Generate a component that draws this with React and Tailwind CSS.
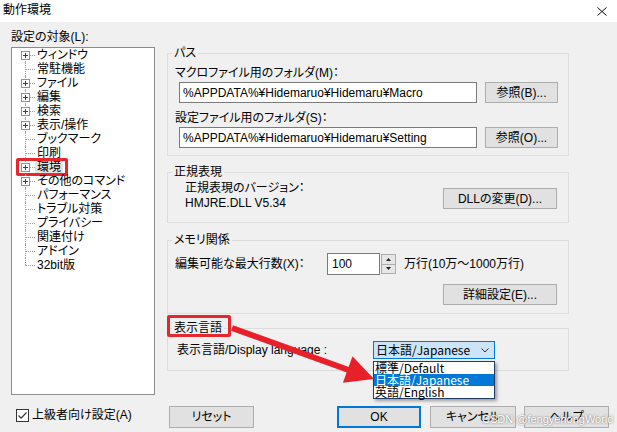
import React from 'react';

const treeItems = [
  { label: 'ウィンドウ', plus: true },
  { label: '常駐機能' },
  { label: 'ファイル', plus: true },
  { label: '編集', plus: true },
  { label: '検索', plus: true },
  { label: '表示/操作', plus: true },
  { label: 'ブックマーク' },
  { label: '印刷' },
  { label: '環境', plus: true, selected: true },
  { label: 'その他のコマンド', plus: true },
  { label: 'パフォーマンス' },
  { label: 'トラブル対策' },
  { label: 'プライバシー' },
  { label: '関連付け' },
  { label: 'アドイン' },
  { label: '32bit版' },
];

const PlusBox = () => (
  <svg className="absolute left-[1px] top-[3px]" width="9" height="9" viewBox="0 0 9 9">
    <rect x="0.5" y="0.5" width="8" height="8" fill="white" stroke="#919191" />
    <path d="M2 4.5h5M4.5 2v5" stroke="#1e3f8f" strokeWidth="1" />
  </svg>
);

const TreeRow = ({ item, first, last }) => {
  const vline = first ? 'top-[7px] bottom-0' : last ? 'top-0 h-[7px]' : 'top-0 bottom-0';
  return (
    <div className="relative flex h-[14px] items-center">
      <div className="relative ml-[8px] h-full w-[17px] shrink-0">
        <div className={`absolute left-[5px] border-l border-dotted border-[#a0a0a0] ${vline}`} />
        <div className="absolute left-[5px] top-[7px] w-[10px] border-t border-dotted border-[#a0a0a0]" />
        {item.plus && <PlusBox />}
      </div>
      <span className={`leading-[14px] ${item.selected ? '-ml-[2px] bg-[#e5e5e5] px-[2px]' : ''}`}>{item.label}</span>
      {item.selected && (
        <div className="pointer-events-none absolute left-[4px] top-[-2px] h-[18px] w-[52px] rounded-[2px] border-[3px] border-[#e8262d]" />
      )}
    </div>
  );
};

const Btn = ({ children, className = '', primary }) => (
  <button
    className={`flex items-center justify-center bg-[#e1e1e1] leading-[14px] ${
      primary ? 'border-2 border-[#0078d7]' : 'border border-[#adadad]'
    } ${className}`}
  >
    {children}
  </button>
);

const Group = ({ title, className = '', children, mark }) => (
  <fieldset className={`border border-[#dcdcdc] ${className}`}>
    <legend className="relative ml-[4px] px-[2px] leading-[14px]">
      {title}
      {mark && (
        <span className="pointer-events-none absolute left-[-5px] top-[-6px] h-[22px] w-[64px] rounded-[2px] border-[3px] border-[#e8262d]" />
      )}
    </legend>
    {children}
  </fieldset>
);

const Field = ({ value }) => (
  <div className="ml-[4px] flex h-[21px] w-[298px] items-center border border-[#7a7a7a] bg-white pl-[3px]">{value}</div>
);

export default function App() {
  return (
    <div className="relative h-[432px] w-[617px] overflow-hidden bg-[#f0f0f0] font-['Liberation_Sans','Noto_Sans_CJK_JP',sans-serif] text-[12px] leading-[14px] text-black [font-feature-settings:'palt']">
      {/* title bar */}
      <div className="flex h-[22px] items-start justify-between bg-white">
        <div className="pl-[3px] pt-[3px]">動作環境</div>
        <svg className="mr-[10px] mt-[7px]" width="10" height="9" viewBox="0 0 10 9">
          <path d="M0.5 0.5l9 8M9.5 0.5l-9 8" stroke="#111" strokeWidth="1" />
        </svg>
      </div>

      <div className="flex h-[384px]">
        {/* left: tree */}
        <div className="w-[155px] pl-[11px] pt-[8px]">
          <div>設定の対象(L):</div>
          <div className="mt-[3px] h-[348px] w-[144px] border border-[#8c8c8c] bg-white">
            {treeItems.map((item, i) => (
              <TreeRow key={item.label} item={item} first={i === 0} last={i === treeItems.length - 1} />
            ))}
          </div>
        </div>

        {/* right: settings */}
        <div className="ml-[12px] flex w-[402px] flex-col pt-[24px]">
          <Group title="パス" className="h-[110px]">
            <div className="pl-[7px] pt-[6px]">
              <div>マクロファイル用のフォルダ(M)：</div>
              <div className="mt-[2px] flex">
                <Field value="%APPDATA%¥Hidemaruo¥Hidemaru¥Macro" />
                <Btn className="ml-[8px] h-[21px] w-[73px]">参照(B)...</Btn>
              </div>
              <div className="mt-[8px]">設定ファイル用のフォルダ(S)：</div>
              <div className="mt-[2px] flex">
                <Field value="%APPDATA%¥Hidemaruo¥Hidemaru¥Setting" />
                <Btn className="ml-[8px] h-[21px] w-[73px]">参照(O)...</Btn>
              </div>
            </div>
          </Group>

          <Group title="正規表現" className="mt-[9px] h-[58px]">
            <div className="flex items-start">
              <div className="pl-[17px] pt-[2px] leading-[15px]">
                <div>正規表現のバージョン：</div>
                <div>HMJRE.DLL V5.34</div>
              </div>
              <Btn className="ml-auto mr-[11px] mt-[9px] h-[21px] w-[114px]">DLLの変更(D)...</Btn>
            </div>
          </Group>

          <Group title="メモリ関係" className="mt-[10px] h-[81px]">
            <div className="mt-[6px] flex h-[22px] items-center pl-[7px]">
              <div className="w-[152px]">編集可能な最大行数(X)：</div>
              <div className="flex h-[22px] w-[53px] items-center border border-[#7a7a7a] bg-white pl-[4px]">100</div>
              <div className="ml-px flex h-[20px] w-[15px] flex-col">
                <div className="flex flex-1 items-center justify-center border border-[#adadad] bg-[#e6e6e6]">
                  <svg width="5" height="3" viewBox="0 0 5 3"><path d="M2.5 0L5 3H0z" fill="#222" /></svg>
                </div>
                <div className="flex flex-1 items-center justify-center border border-t-0 border-[#adadad] bg-[#e6e6e6]">
                  <svg width="5" height="3" viewBox="0 0 5 3"><path d="M0 0h5L2.5 3z" fill="#222" /></svg>
                </div>
              </div>
              <div className="ml-[8px]">万行(10万～1000万行)</div>
            </div>
            <div className="mt-[9px] flex justify-end pr-[11px]">
              <Btn className="h-[21px] w-[114px]">詳細設定(E)...</Btn>
            </div>
          </Group>

          <Group title="表示言語" className="mt-[7px] h-[50px]" mark>
            <div className="mt-[6px] flex h-[18px] items-center pl-[9px]">
              <div className="w-[196px]">表示言語/Display language :</div>
              <div className="relative flex h-[18px] w-[122px] items-center border border-[#0078d7] bg-[#cce4f7] pl-[2px] font-['Noto_Sans_CJK_JP',sans-serif]">
                <span>日本語/Japanese</span>
                <svg className="absolute right-[5px] top-[6px]" width="8" height="5" viewBox="0 0 8 5">
                  <path d="M0.5 0.5L4 4l3.5-3.5" fill="none" stroke="#333" strokeWidth="1" />
                </svg>
                <div className="absolute left-[-1px] top-[19px] w-[122px] border border-[#1f3b66] bg-white shadow-[2px_2px_3px_rgba(0,0,0,0.35)]">
                  <div className="h-[12px] pl-px leading-[12px]">標準/Default</div>
                  <div className="h-[12px] bg-[#0078d7] pl-px leading-[12px] text-white">日本語/Japanese</div>
                  <div className="h-[12px] pl-px leading-[12px]">英語/English</div>
                </div>
              </div>
            </div>
          </Group>
        </div>
      </div>

      {/* bottom bar */}
      <div className="flex h-[22px] items-center">
        <div className="flex w-[169px] items-center self-start pl-[16px] pt-[3px]">
          <svg width="13" height="13" viewBox="0 0 13 13">
            <rect x="0.5" y="0.5" width="12" height="12" fill="white" stroke="#333" />
            <path d="M2.5 6.5l2.6 2.6L10.5 3.5" fill="none" stroke="#333" strokeWidth="1.2" />
          </svg>
          <span className="ml-[3px] leading-[13px]">上級者向け設定(A)</span>
        </div>
        <Btn className="h-[22px] w-[85px]">リセット</Btn>
        <Btn primary className="ml-[83px] h-[22px] w-[84px]">OK</Btn>
        <Btn className="ml-[9px] h-[22px] w-[86px]">キャンセル</Btn>
        <Btn className="ml-[8px] h-[22px] w-[85px]">ヘルプ</Btn>
      </div>

      {/* annotation arrow */}
      <svg className="pointer-events-none absolute left-0 top-0" width="617" height="432" viewBox="0 0 617 432">
        <line x1="232" y1="328" x2="350" y2="370.5" stroke="#e8202a" strokeWidth="6" />
        <polygon points="374,379 352.5,356.3 342.9,382.7" fill="#e8202a" />
      </svg>

      {/* watermark */}
      <div className="pointer-events-none absolute left-[482px] top-[412px] whitespace-nowrap text-[11px] leading-[14px] text-white [text-shadow:0_0_2px_#555]">
        CSDN @fengyehongWorld
      </div>
    </div>
  );
}
